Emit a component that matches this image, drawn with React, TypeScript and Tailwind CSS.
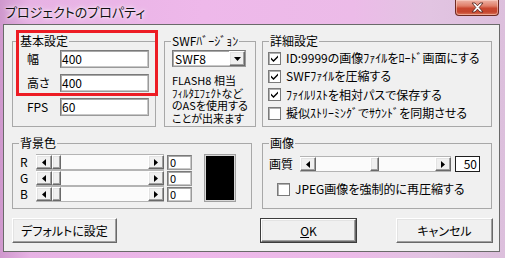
import React from "react";

const raised =
  "border border-t-white border-l-white border-r-[#696969] border-b-[#696969] shadow-[inset_-1px_-1px_0_#a0a0a0,inset_1px_1px_0_#e3e3e3]";
const sunken =
  "border border-t-[#7a7a7a] border-l-[#7a7a7a] border-r-[#9a9a9a] border-b-[#9a9a9a] shadow-[inset_1px_1px_0_#a8a8a8,inset_-1px_-1px_0_#c8c8c8]";

function Arrow({ dir }: { dir: "l" | "r" | "d" }) {
  if (dir === "d")
    return (
      <svg width="7" height="4" viewBox="0 0 7 4">
        <path d="M0 0H7L3.5 4Z" fill="black" />
      </svg>
    );
  return (
    <svg width="4" height="7" viewBox="0 0 4 7">
      <path d={dir === "l" ? "M4 0V7L0 3.5Z" : "M0 0V7L4 3.5Z"} fill="black" />
    </svg>
  );
}

function ArrowBtn({ dir }: { dir: "l" | "r" }) {
  return (
    <div className={`w-[16px] h-full shrink-0 flex items-center justify-center bg-[#f0f0f0] ${raised}`}>
      <Arrow dir={dir} />
    </div>
  );
}

function ScrollBar({ width, thumb }: { width: number; thumb: number }) {
  return (
    <div className="flex h-[16px] bg-white border-y border-[#b4b4b4]" style={{ width }}>
      <ArrowBtn dir="l" />
      <div className="flex-1 h-full relative bg-[#fbfbfb]">
        <div
          className={`absolute top-0 h-full w-[9px] bg-[#f0f0f0] ${raised}`}
          style={{ left: thumb }}
        />
      </div>
      <ArrowBtn dir="r" />
    </div>
  );
}

function Check({ checked, label }: { checked: boolean; label: string }) {
  return (
    <div className="flex items-center h-[18px]">
      <div className="w-[13px] h-[13px] border border-[#7a7a7a] bg-white shadow-[inset_1px_1px_0_#b0b0b0] flex items-center justify-center shrink-0">
        {checked && (
          <svg width="7" height="7" viewBox="0 0 7 7">
            <path d="M0 2.5L2.5 5L7 0.5V2.5L2.5 7L0 4.5Z" fill="black" />
          </svg>
        )}
      </div>
      <span className="ml-[5px] whitespace-nowrap leading-[14px]">{label}</span>
    </div>
  );
}

function Group({
  title,
  className,
  children,
}: {
  title: string;
  className: string;
  children: React.ReactNode;
}) {
  return (
    <fieldset className={`border border-[#a8a8a8] p-0 m-0 min-w-0 ${className}`}>
      <legend className="ml-[6px] px-[1px] text-[12px] leading-[16px] whitespace-nowrap">{title}</legend>
      {children}
    </fieldset>
  );
}

function Field({ label, value }: { label: string; value: string }) {
  return (
    <div className="flex items-center h-[18px]">
      <span className="w-[33px] leading-[14px]">{label}</span>
      <div className={`w-[89px] h-[18px] bg-white flex items-center pl-[1px] ${sunken}`}>
        <span className="leading-[14px]">{value}</span>
      </div>
    </div>
  );
}

function Button({ children, def, className }: { children: React.ReactNode; def?: boolean; className: string }) {
  return (
    <div className={`h-[25px] ${def ? "border border-[#3c3c3c]" : ""} ${className}`}>
      <div className={`w-full h-full bg-[#f0f0f0] flex items-center justify-center ${raised}`}>
        <span className="leading-[14px] whitespace-nowrap">{children}</span>
      </div>
    </div>
  );
}

export default function App() {
  return (
    <div className="w-[505px] h-[258px] overflow-hidden relative bg-[linear-gradient(90deg,#cf98cd_0%,#e7b2e4_6%,#eeb8ea_40%,#ecbbe8_70%,#e2c4e2_85%,#dcbfdc_100%)] font-['Noto_Sans_CJK_JP',sans-serif] text-[12px] text-black [font-feature-settings:'palt']">
      {/* title bar */}
      <div className="h-[24px] flex items-start">
        <span className="ml-[5px] mt-[3px] text-[13px] leading-[18px] text-[#111] [text-shadow:0_0_6px_#fff,0_0_3px_#fff]">
          プロジェクトのプロパティ
        </span>
        <div className="ml-auto mr-[6px] w-[44px] h-[16px] rounded-b-[4px] border border-t-0 border-[#6e2a22] bg-[linear-gradient(180deg,#eeb3a6_0%,#e07e68_40%,#c9472f_55%,#c4452e_80%,#de7a5e_100%)] shadow-[inset_0_0_0_1px_rgba(255,220,210,0.5)] flex items-center justify-center">
          <svg width="13" height="11" viewBox="0 0 13 11">
            <path
              d="M1 1H4L6.5 3.8L9 1H12L8.2 5.5L12 10H9L6.5 7.2L4 10H1L4.8 5.5Z"
              fill="white"
              stroke="#5a2a24"
              strokeWidth="0.9"
              strokeLinejoin="round"
            />
          </svg>
        </div>
      </div>

      {/* client area */}
      <div className="ml-[3px] w-[497px] h-[228px] border border-[#6a6a6a] bg-[#f0f0f0] relative flex flex-col pl-[8px] pt-[8px]">
        {/* row 1 */}
        <div className="flex h-[94px]">
          <Group title="基本設定" className="w-[144px] h-[94px]">
            <div className="flex flex-col gap-[6px] pt-[1px] pl-[14px]">
              <Field label="幅" value="400" />
              <Field label="高さ" value="400" />
              <Field label="FPS" value="60" />
            </div>
          </Group>
          <Group title="SWFﾊﾞｰｼﾞｮﾝ" className="w-[92px] h-[94px] ml-[8px]">
            <div className="pl-[7px] pt-[1px]">
              <div className={`w-[74px] h-[17px] bg-white flex items-center ${sunken}`}>
                <span className="flex-1 pl-[2px] leading-[14px]">SWF8</span>
                <div className={`w-[16px] h-full bg-[#f0f0f0] flex items-center justify-center ${raised}`}>
                  <Arrow dir="d" />
                </div>
              </div>
              <div className="mt-[7px] text-[11px] leading-[12.5px] whitespace-nowrap flex flex-col">
                <span>FLASH8 相当</span>
                <span>ﾌｨﾙﾀｴﾌｪｸﾄなど</span>
                <span>のASを使用する</span>
                <span>ことが出来ます</span>
              </div>
            </div>
          </Group>
          <Group title="詳細設定" className="w-[230px] h-[94px] ml-[6px]">
            <div className="flex flex-col pl-[5px] gap-[0.4px]">
              <Check checked label="ID:9999の画像ﾌｧｲﾙをﾛｰﾄﾞ画面にする" />
              <Check checked label="SWFﾌｧｲﾙを圧縮する" />
              <Check checked label="ﾌｧｲﾙﾘｽﾄを相対パスで保存する" />
              <Check checked={false} label="擬似ｽﾄﾘｰﾐﾝｸﾞでｻｳﾝﾄﾞを同期させる" />
            </div>
          </Group>
        </div>

        {/* row 2 */}
        <div className="flex h-[74px] mt-[8px]">
          <Group title="背景色" className="w-[240px] h-[74px]">
            <div className="flex pt-[3px] pl-[7px]">
              <div className="flex flex-col">
                {["R", "G", "B"].map((c) => (
                  <div key={c} className="flex items-center h-[16px]">
                    <span className="w-[16px] leading-[14px]">{c}</span>
                    <ScrollBar width={128} thumb={0} />
                    <div className={`ml-[3px] w-[25px] h-[15px] bg-white flex items-center pl-[2px] ${sunken}`}>
                      <span className="text-[11px] leading-[12px]">0</span>
                    </div>
                  </div>
                ))}
              </div>
              <div className="ml-[12px] w-[32px] h-[48px] border border-[#a0a0a0] bg-black shadow-[inset_0_0_0_1px_#d8d8d8]" />
            </div>
          </Group>
          <Group title="画像" className="w-[230px] h-[74px] ml-[10px]">
            <div className="flex flex-col pt-[5px]">
              <div className="flex items-center h-[16px] pl-[6px]">
                <span className="w-[31px] leading-[14px]">画質</span>
                <ScrollBar width={151} thumb={54} />
                <div className="ml-[4px] w-[25px] h-[16px] bg-white border border-[#1e1e1e] flex items-center justify-end pr-[2px]">
                  <span className="leading-[12px]">50</span>
                </div>
              </div>
              <div className="pl-[14px] mt-[8px]">
                <Check checked={false} label="JPEG画像を強制的に再圧縮する" />
              </div>
            </div>
          </Group>
        </div>

        {/* row 3 */}
        <div className="flex mt-[9px]">
          <Button className="w-[105px]">デフォルトに設定</Button>
          <Button def className="w-[97px] ml-[143px]">
            <span className="underline underline-offset-[1px]">O</span>K
          </Button>
          <Button className="w-[97px] ml-[39px]">キャンセル</Button>
        </div>

        {/* red annotation */}
        <div className="absolute left-[12px] top-[5px] w-[142px] h-[66px] border-[3px] border-[#ed1c24] pointer-events-none" />
      </div>
    </div>
  );
}
